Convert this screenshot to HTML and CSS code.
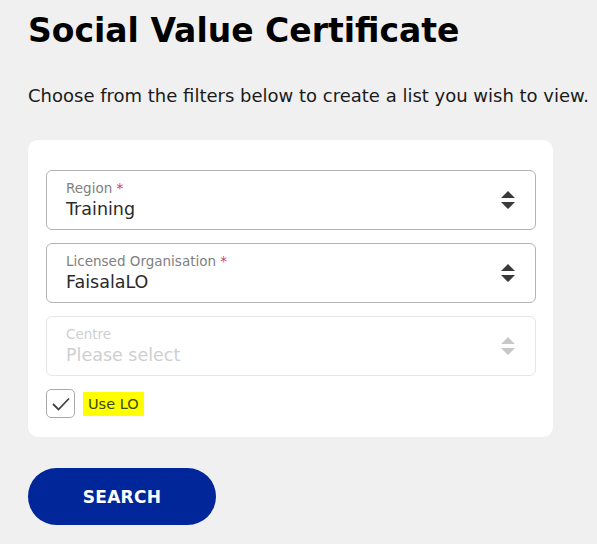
FILE: index.html
```html
<!DOCTYPE html>
<html lang="en">
<head>
<meta charset="utf-8">
<title>Social Value Certificate</title>
<link rel="stylesheet" href="styles.css">
</head>
<body>
<main class="page">
  <h1 class="title">Social Value Certificate</h1>
  <p class="intro">Choose from the filters below to create a list you wish to view.</p>
  <section class="card">
    <div class="select">
      <div class="select-text">
        <span class="label">Region <span class="req">*</span></span>
        <span class="value">Training</span>
      </div>
      <svg class="arrows" width="16" height="18" viewBox="0 0 16 18"><path d="M8 0 L15 7 H1 Z M1 11 H15 L8 18 Z" fill="#3a3a3a"/></svg>
    </div>
    <div class="select">
      <div class="select-text">
        <span class="label">Licensed Organisation <span class="req">*</span></span>
        <span class="value">FaisalaLO</span>
      </div>
      <svg class="arrows" width="16" height="18" viewBox="0 0 16 18"><path d="M8 0 L15 7 H1 Z M1 11 H15 L8 18 Z" fill="#3a3a3a"/></svg>
    </div>
    <div class="select disabled">
      <div class="select-text">
        <span class="label">Centre</span>
        <span class="value">Please select</span>
      </div>
      <svg class="arrows" width="16" height="18" viewBox="0 0 16 18"><path d="M8 0 L15 7 H1 Z M1 11 H15 L8 18 Z" fill="#c8c8c8"/></svg>
    </div>
    <label class="check">
      <span class="box"><svg width="18" height="14" viewBox="0 0 18 14"><path d="M1 7 L6.5 12.5 L17 1.5" fill="none" stroke="#444" stroke-width="1.8"/></svg></span>
      <span class="check-text">Use LO</span>
    </label>
  </section>
  <button class="search" type="button">SEARCH</button>
</main>
</body>
</html>
```
FILE: styles.css
```css
html, body {
  margin: 0;
  padding: 0;
  background: #f0f0f0;
}
body {
  font-family: "DejaVu Sans", "Open Sans", sans-serif;
  color: #1a1a1a;
}
.page {
  padding: 0 28px;
  display: flex;
  flex-direction: column;
  align-items: flex-start;
}
.title {
  margin: 9px 0 0;
  font-size: 33px;
  line-height: 44px;
  font-weight: 700;
  letter-spacing: 0;
  color: #000;
}
.intro {
  margin: 31px 0 0;
  font-size: 18px;
  line-height: 24px;
  color: #1a1a1a;
  white-space: nowrap;
}
.card {
  margin-top: 32px;
  width: 525px;
  box-sizing: border-box;
  background: #fff;
  border-radius: 10px;
  padding: 30px 17px 19px 18px;
  display: flex;
  flex-direction: column;
  gap: 13px;
}
.select {
  height: 60px;
  box-sizing: border-box;
  border: 1px solid #b3b3b3;
  border-radius: 6px;
  display: flex;
  align-items: center;
  justify-content: space-between;
  padding: 0 19px 0 19px;
}
.select-text {
  display: flex;
  flex-direction: column;
}
.label {
  font-size: 13.5px;
  line-height: 18px;
  color: #808080;
}
.req {
  color: #d0416a;
}
.value {
  font-size: 17.5px;
  line-height: 24px;
  color: #2a2a2a;
}
.select.disabled {
  border-color: #e6e6e6;
}
.select.disabled .label,
.select.disabled .value {
  color: #cfcfcf;
}
.check {
  display: flex;
  align-items: center;
  gap: 8px;
}
.box {
  width: 29px;
  height: 29px;
  box-sizing: border-box;
  border: 1px solid #aaa;
  border-radius: 5px;
  display: flex;
  align-items: center;
  justify-content: center;
}
.check-text {
  background: #ffff00;
  font-size: 14.5px;
  line-height: 24px;
  padding: 0 5px;
  color: #3a4a10;
}
.search {
  margin-top: 31px;
  width: 188px;
  height: 57px;
  border: none;
  border-radius: 29px;
  background: #00269a;
  color: #fff;
  font-family: inherit;
  font-size: 17px;
  font-weight: 700;
  letter-spacing: 0.3px;
}
```
